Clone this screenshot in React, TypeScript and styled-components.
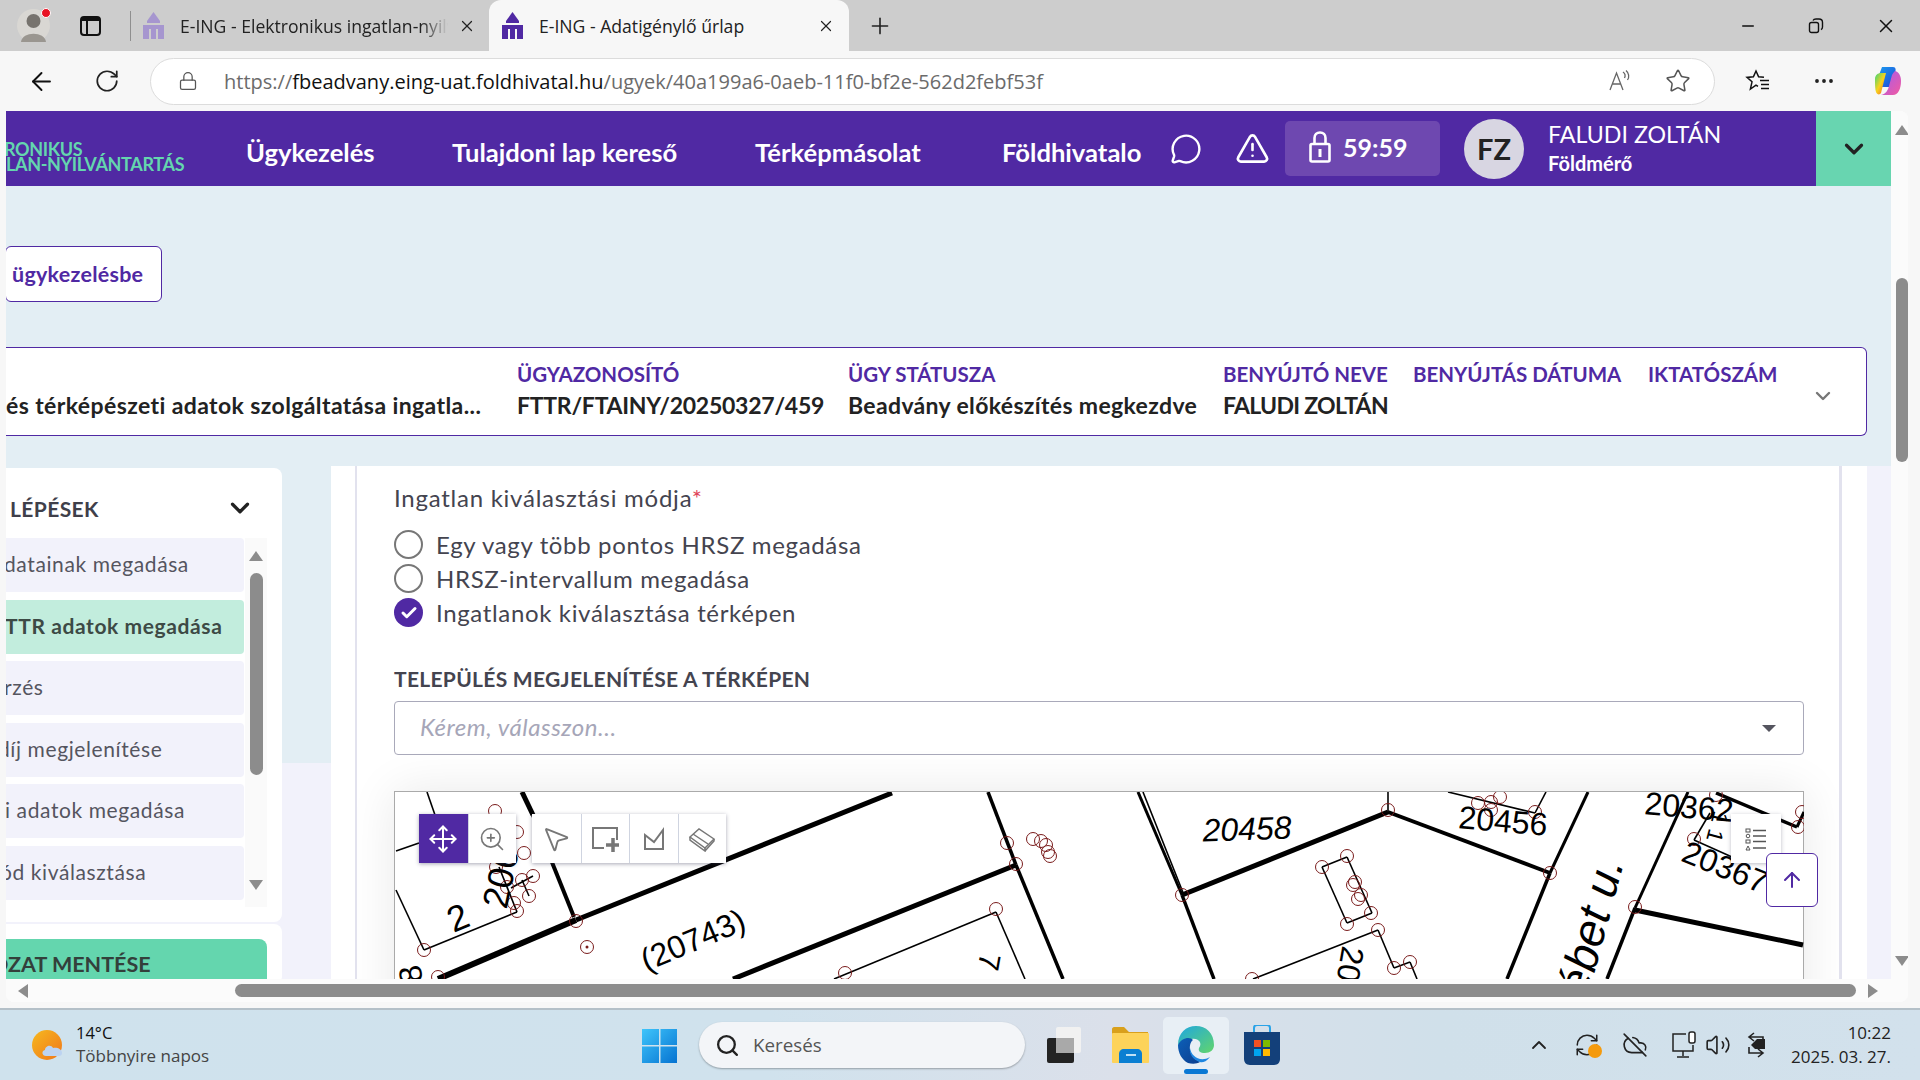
import styled, { createGlobalStyle } from "styled-components";
import {
  ArrowLeft,
  ArrowUp,
  Check,
  ChevronDown,
  ChevronUp,
  CloudOff,
  Lock,
  MessageCircle,
  Minus,
  Move,
  MoreHorizontal,
  MousePointer2,
  Plus,
  RefreshCw,
  RotateCw,
  Search,
  Star,
  TriangleAlert,
  Volume2,
  X,
  ZoomIn,
} from "lucide-react";

const PURPLE = "#5029a3";
const PAGE_FONT = `Lato, "Noto Sans", sans-serif`;
const UI_FONT = `"Open Sans", "Noto Sans", sans-serif`;

const GlobalStyle = createGlobalStyle`
  html, body {
    margin: 0;
    padding: 0;
    background: #f7f7f7;
  }
  * {
    box-sizing: border-box;
  }
`;

const Screen = styled.div`
  width: 1920px;
  height: 1080px;
  overflow: hidden;
  display: flex;
  flex-direction: column;
  background: #f7f7f7;
  font-family: ${PAGE_FONT};
`;

/* browser chrome */

const TabStrip = styled.div`
  height: 51px;
  background: #cdcdcd;
  display: flex;
  align-items: center;
  position: relative;
  font-family: ${UI_FONT};
  color: #222;
`;

const ProfileSlot = styled.div`
  width: 17px;
`;

const Avatar = styled.div`
  width: 33px;
  height: 33px;
  border-radius: 50%;
  background: #d9d7d3;
  position: relative;
`;

const RedDot = styled.span`
  position: absolute;
  top: -1px;
  right: -1px;
  width: 10px;
  height: 10px;
  background: #e81123;
  border-radius: 50%;
  border: 1px solid #fff;
`;

const TabsToggle = styled.div`
  width: 21px;
  height: 20px;
  margin-left: 30px;
  border: 2px solid #111;
  border-radius: 4px;
  border-top-width: 5px;
  position: relative;
  &::after {
    content: "";
    position: absolute;
    left: 4px;
    top: -1px;
    bottom: 0;
    width: 1.5px;
    background: #111;
  }
`;

const Divider = styled.div`
  width: 1px;
  height: 30px;
  background: #8f8f8f;
  margin: 0 12px 0 29px;
`;

const Tab = styled.div<{ $active?: boolean; $w: number }>`
  width: ${(p) => p.$w}px;
  height: ${(p) => (p.$active ? "51px" : "40px")};
  display: flex;
  align-items: center;
  flex-shrink: 0;
  background: ${(p) => (p.$active ? "#f7f7f7" : "transparent")};
  border-radius: ${(p) => (p.$active ? "12px 12px 0 0" : "0")};
  padding-left: ${(p) => (p.$active ? "13px" : "0")};
`;

const TabTitle = styled.span<{ $w: number; $faded?: boolean }>`
  width: ${(p) => p.$w}px;
  margin-left: 16px;
  white-space: nowrap;
  overflow: hidden;
  font-size: 17.6px;
  ${(p) =>
    p.$faded
      ? "-webkit-mask-image: linear-gradient(90deg, #000 90%, transparent 100%);"
      : ""}
`;

const CloseGlyph = styled.span<{ $ml: number }>`
  display: flex;
  margin-left: ${(p) => p.$ml}px;
`;

const NewTabGlyph = styled.span`
  display: flex;
  margin-left: 18px;
`;

const WindowButtons = styled.div`
  margin-left: auto;
  display: flex;
  align-items: center;
  gap: 51px;
  padding-right: 23px;
`;

const AddressRow = styled.div`
  height: 60px;
  display: flex;
  align-items: center;
  background: #f7f7f7;
  font-family: ${UI_FONT};
  padding-left: 27px;
`;

const NavIconSlot = styled.div<{ $w: number }>`
  width: ${(p) => p.$w}px;
  display: flex;
  align-items: center;
  flex-shrink: 0;
`;

const Omnibox = styled.div`
  width: 1565px;
  height: 47px;
  background: #fff;
  border: 1.5px solid #dcdcdc;
  border-radius: 24px;
  display: flex;
  align-items: center;
  padding: 0 23px 0 27px;
  flex-shrink: 0;
`;

const Url = styled.div`
  margin-left: 26px;
  font-size: 20px;
  color: #6b6b6b;
  white-space: nowrap;
  & b {
    font-weight: 400;
    color: #111;
  }
`;

const OmniIcons = styled.div`
  margin-left: auto;
  display: flex;
  align-items: center;
  gap: 33px;
  color: #666;
`;

const ChromeTools = styled.div`
  display: flex;
  align-items: center;
  margin-left: 30px;
  gap: 41px;
`;

const CopilotSlot = styled.div`
  display: flex;
  margin-left: -5px;
`;

/* the page inside the browser */

const Viewport = styled.div`
  height: 891px;
  margin: 0 12px 0 6px;
  background: #fbfbfb;
  border-radius: 0 8px 8px 8px;
  overflow: hidden;
  display: flex;
  flex-direction: column;
  position: relative;
`;

const ViewportRow = styled.div`
  flex: 1;
  min-height: 0;
  display: flex;
`;

const Page = styled.div`
  width: 1885px;
  display: flex;
  flex-direction: column;
  background: #e3eef4;
  overflow: hidden;
`;

const VScroll = styled.div`
  width: 17px;
  padding-left: 5px;
  display: flex;
  flex-direction: column;
  align-items: center;
  background: #fbfbfb;
`;

const ScrollArrowUp = styled.span<{ $mt?: number }>`
  width: 0;
  height: 0;
  margin-top: ${(p) => p.$mt || 0}px;
  border-left: 7px solid transparent;
  border-right: 7px solid transparent;
  border-bottom: 10px solid #8c8c8c;
`;

const ScrollArrowDown = styled.span<{ $mt?: number }>`
  width: 0;
  height: 0;
  margin-top: ${(p) => p.$mt || 0}px;
  border-left: 7px solid transparent;
  border-right: 7px solid transparent;
  border-top: 10px solid #8c8c8c;
`;

const VThumb = styled.div`
  width: 12px;
  height: 184px;
  background: #8c8c8c;
  border-radius: 6px;
  margin-top: 143px;
`;

const HScroll = styled.div`
  height: 23px;
  display: flex;
  align-items: center;
  background: #fbfbfb;
  padding-left: 12px;
`;

const ArrowLeftTri = styled.span`
  width: 0;
  height: 0;
  border-top: 7px solid transparent;
  border-bottom: 7px solid transparent;
  border-right: 10px solid #8c8c8c;
`;

const ArrowRightTri = styled.span`
  width: 0;
  height: 0;
  border-top: 7px solid transparent;
  border-bottom: 7px solid transparent;
  border-left: 10px solid #8c8c8c;
  margin-left: 12px;
`;

const HThumb = styled.div`
  width: 1621px;
  height: 13px;
  background: #8c8c8c;
  border-radius: 7px;
  margin-left: 207px;
`;

/* header */

const Header = styled.div`
  height: 75px;
  background: ${PURPLE};
  display: flex;
  align-items: center;
  flex-shrink: 0;
  color: #fff;
`;

const Logo = styled.div`
  width: 240px;
  font-size: 18px;
  line-height: 15px;
  font-weight: 700;
  color: #64d6ae;
  white-space: nowrap;
  overflow: hidden;
  padding-top: 17px;
  letter-spacing: -0.35px;
  text-indent: -2px;
`;

const Nav = styled.nav`
  display: grid;
  grid-template-columns: 206px 303px 247px 137px;
  font-size: 25.6px;
  font-weight: 700;
  white-space: nowrap;
  padding-top: 6px;
`;

const NavLink = styled.a`
  color: #fff;
  text-decoration: none;
`;

const HeaderIcons = styled.div`
  width: 146px;
  display: flex;
  align-items: center;
  padding-left: 31px;
  gap: 33px;
`;

const Timer = styled.div`
  width: 155px;
  height: 55px;
  background: #6e48b0;
  border-radius: 5px;
  display: flex;
  align-items: center;
  padding: 0 0 3px 24px;
  gap: 12px;
  font-size: 25px;
  font-weight: 700;
`;

const Initials = styled.div`
  width: 60px;
  height: 60px;
  border-radius: 50%;
  background: #d8d6e2;
  color: #222;
  font-size: 29px;
  font-weight: 700;
  display: flex;
  align-items: center;
  justify-content: center;
  margin-left: 24px;
`;

const UserBlock = styled.div`
  margin-left: 24px;
  width: 268px;
  padding-bottom: 5px;
  display: flex;
  flex-direction: column;
  gap: 4px;
`;

const UserName = styled.div`
  font-size: 23.2px;
  line-height: 30px;
  font-weight: 400;
`;

const UserRole = styled.div`
  font-size: 20px;
  line-height: 20px;
  font-weight: 700;
`;

const HeaderToggle = styled.div`
  width: 75px;
  height: 75px;
  margin-left: auto;
  background: #68d5b0;
  color: #222;
  display: flex;
  align-items: center;
  justify-content: center;
`;

/* top of the page */

const BackButton = styled.div`
  width: 157px;
  height: 56px;
  margin: 60px 0 0 -1px;
  flex-shrink: 0;
  background: #fff;
  border: 1.5px solid ${PURPLE};
  border-radius: 6px;
  display: flex;
  align-items: center;
  padding-left: 6px;
  color: ${PURPLE};
  font-size: 21.5px;
  letter-spacing: 0.25px;
  font-weight: 700;
`;

const InfoBox = styled.div`
  height: 89px;
  width: 1861px;
  margin: 45px 0 30px 0;
  flex-shrink: 0;
  background: #fff;
  border: 1.5px solid ${PURPLE};
  border-left: 0;
  border-radius: 0 6px 6px 0;
  display: grid;
  grid-template-columns: 511px 331px 375px 190px 235px 1fr;
  align-items: start;
  padding-top: 12px;
  position: relative;
`;

const InfoCol = styled.div`
  display: flex;
  flex-direction: column;
  gap: 3px;
  white-space: nowrap;
`;

const InfoLabel = styled.div`
  font-size: 20.5px;
  line-height: 28px;
  font-weight: 700;
  color: ${PURPLE};
`;

const InfoValue = styled.div<{ $ls: number }>`
  font-size: 23px;
  line-height: 28px;
  font-weight: 700;
  letter-spacing: ${(p) => p.$ls}px;
  color: #222;
`;

const InfoToggle = styled.div`
  position: absolute;
  right: 31px;
  top: 36px;
  color: #777;
  display: flex;
`;

/* body: steps + form */

const Body = styled.div`
  flex: 1;
  min-height: 0;
  display: flex;
  overflow: hidden;
  background: linear-gradient(#e3eef4 297px, #f2f2fb 297px);
`;

const Sidebar = styled.aside`
  width: 276px;
  padding-top: 2px;
  display: flex;
  flex-direction: column;
  gap: 2px;
  flex-shrink: 0;
`;

const SidePanel = styled.div<{ $h: number }>`
  height: ${(p) => p.$h}px;
  flex-shrink: 0;
  background: #fff;
  border-radius: 0 8px 8px 0;
  overflow: hidden;
`;

const StepsHead = styled.div`
  height: 70px;
  padding: 25px 27px 0 4px;
  display: flex;
  justify-content: space-between;
  align-items: flex-start;
  font-size: 21px;
  letter-spacing: 0.4px;
  line-height: 32px;
  font-weight: 700;
  color: #3f3f4a;
`;

const StepsBody = styled.div`
  display: flex;
`;

const StepList = styled.div`
  width: 238px;
  display: flex;
  flex-direction: column;
  gap: 7.6px;
`;

const Step = styled.div<{ $active?: boolean }>`
  height: 54px;
  padding-bottom: 3px;
  background: ${(p) => (p.$active ? "#c2eddd" : "#f2f2fb")};
  border-radius: 0 4px 4px 0;
  display: flex;
  align-items: center;
  overflow: hidden;
  white-space: nowrap;
  font-size: 21px;
  letter-spacing: 0.6px;
  font-weight: ${(p) => (p.$active ? 700 : 400)};
  color: ${(p) => (p.$active ? "#3d4a45" : "#55555f")};
`;

const StepText = styled.span<{ $shift: number }>`
  margin-left: ${(p) => p.$shift}px;
`;

const StepScroll = styled.div`
  width: 22px;
  height: 369px;
  margin-left: 1px;
  background: #fafafa;
  display: flex;
  flex-direction: column;
  align-items: center;
  padding-top: 13px;
`;

const StepThumb = styled.div`
  width: 13px;
  height: 202px;
  background: #8c8c8c;
  border-radius: 7px;
  margin: 12px 0 105px;
`;

const SaveButton = styled.div`
  width: 261px;
  height: 60px;
  margin-top: 15px;
  background: #64d6ae;
  border-radius: 0 8px 0 0;
  font-size: 21.5px;
  font-weight: 700;
  color: #33403b;
  padding-top: 12px;
  white-space: nowrap;
  text-indent: -15px;
`;

const Main = styled.main`
  width: 1536px;
  margin-left: 49px;
  background: #fff;
  padding-left: 24px;
  flex-shrink: 0;
`;

const FormCard = styled.div`
  width: 1487px;
  height: 100%;
  border-left: 2.5px solid #e2e2ee;
  border-right: 3px solid #e2e2ee;
  padding: 16px 35px 0 37px;
  color: #44444f;
  overflow: hidden;
`;

const FieldLabel = styled.div`
  font-size: 24px;
  letter-spacing: 0.75px;
  line-height: 32px;
  font-weight: 400;
  & em {
    color: #e0455a;
    font-style: normal;
  }
`;

const RadioGroup = styled.div`
  margin-top: 16px;
  display: flex;
  flex-direction: column;
  gap: 5px;
`;

const RadioRow = styled.label`
  display: flex;
  align-items: center;
  gap: 13px;
  height: 29px;
  font-size: 24px;
  letter-spacing: 0.65px;
`;

const RadioMark = styled.span<{ $on?: boolean }>`
  width: 29px;
  height: 29px;
  border-radius: 50%;
  border: ${(p) => (p.$on ? "0" : "2.5px solid #777")};
  background: ${(p) => (p.$on ? PURPLE : "#fff")};
  color: #fff;
  display: flex;
  align-items: center;
  justify-content: center;
  flex-shrink: 0;
`;

const SectionLabel = styled.div`
  margin-top: 38px;
  font-size: 21px;
  letter-spacing: 0.3px;
  line-height: 28px;
  font-weight: 700;
  color: #44444f;
`;

const Select = styled.div`
  margin-top: 8px;
  height: 54px;
  padding: 0 27px 4px 25px;
  border: 1.5px solid #a9a9ba;
  border-radius: 4px;
  display: flex;
  align-items: center;
  justify-content: space-between;
  font-size: 24px;
  letter-spacing: 0.55px;
  font-style: italic;
  color: #a6a6b8;
`;

const Caret = styled.span`
  width: 0;
  height: 0;
  margin-top: 4px;
  border-left: 7px solid transparent;
  border-right: 7px solid transparent;
  border-top: 7px solid #55555f;
`;

const MapBox = styled.div`
  margin-top: 36px;
  height: 240px;
  position: relative;
  background: #fff;
  border: 1px solid #aaa;
  border-width: 1px 1px 0 1px;
  box-shadow: 0 0 45px rgba(0, 0, 0, 0.09);
`;

const MapSvg = styled.svg`
  display: block;
  width: 1409px;
  height: 187px;
`;

const ToolGroup = styled.div<{ $left: number }>`
  position: absolute;
  left: ${(p) => p.$left}px;
  top: 22px;
  display: flex;
  background: #fff;
  box-shadow: 0 1px 4px rgba(60, 60, 90, 0.45);
`;

const ToolButton = styled.div<{ $active?: boolean }>`
  width: 48.5px;
  height: 49px;
  display: flex;
  align-items: center;
  justify-content: center;
  color: ${(p) => (p.$active ? "#fff" : "#777")};
  background: ${(p) => (p.$active ? PURPLE : "#fff")};
  & + & {
    border-left: 1px solid #cfd4e0;
  }
`;

const LegendButton = styled.div`
  position: absolute;
  left: 1336px;
  top: 22px;
  width: 50px;
  height: 49px;
  background: #fff;
  box-shadow: 0 1px 4px rgba(60, 60, 90, 0.35);
  display: flex;
  align-items: center;
  justify-content: center;
`;

const TopButton = styled.div`
  position: absolute;
  left: 1371px;
  top: 61px;
  width: 52px;
  height: 54px;
  background: #fff;
  border: 1.5px solid ${PURPLE};
  border-radius: 6px;
  color: ${PURPLE};
  display: flex;
  align-items: center;
  justify-content: center;
`;

const RightGutter = styled.div`
  flex: 1;
  background: #f2f2fb;
`;

/* windows taskbar */

const Taskbar = styled.div`
  height: 72px;
  margin-top: 6px;
  border-top: 2px solid #b4c0c8;
  background: linear-gradient(90deg, #cfe2ed 0%, #d0e2ed 40%, #dbe0ea 58%, #d0e0ea 75%, #d2e1ec 100%);
  display: flex;
  align-items: center;
  position: relative;
  font-family: ${UI_FONT};
  color: #222;
`;

const Weather = styled.div`
  margin-left: 32px;
  display: flex;
  align-items: center;
  gap: 12px;
  width: 610px;
`;

const WeatherText = styled.div`
  display: flex;
  flex-direction: column;
  padding-bottom: 2px;
  font-size: 17px;
  line-height: 23px;
  color: #444;
  & b {
    font-weight: 400;
    color: #111;
    font-size: 16.5px;
  }
`;

const SearchPill = styled.div`
  width: 326px;
  height: 46px;
  margin-left: 22px;
  border-radius: 23px;
  background: #f3f5f8;
  box-shadow: 0 1px 2px rgba(0, 0, 0, 0.3);
  display: flex;
  align-items: center;
  padding-left: 16px;
  gap: 13px;
  font-size: 18.8px;
  color: #555;
`;

const AppIcons = styled.div`
  display: flex;
  align-items: center;
  margin-left: 6px;
`;

const AppSlot = styled.div<{ $active?: boolean }>`
  width: 66px;
  height: 57px;
  border-radius: 5px;
  display: flex;
  align-items: center;
  justify-content: center;
  position: relative;
  background: ${(p) => (p.$active ? "#e8eff5" : "transparent")};
  &::after {
    content: "";
    display: ${(p) => (p.$active ? "block" : "none")};
    position: absolute;
    bottom: 0;
    left: 21px;
    width: 24px;
    height: 5px;
    background: #0a78d4;
    border-radius: 3px;
  }
`;

const Tray = styled.div`
  margin-left: auto;
  display: flex;
  align-items: center;
  padding-right: 29px;
`;

const TrayItem = styled.div<{ $ml: number }>`
  margin-left: ${(p) => p.$ml}px;
  display: flex;
  position: relative;
`;

const SyncDot = styled.span`
  position: absolute;
  right: -2px;
  bottom: 0;
  width: 14px;
  height: 14px;
  border-radius: 50%;
  background: #f59a0c;
`;

const Clock = styled.div`
  margin-left: 23px;
  text-align: right;
  font-size: 17px;
  line-height: 24px;
  color: #222;
`;

const MAP_THICK: [number, number, number, number, number][] = [
  [437, 979, 575, 920, 6],
  [575, 920, 891, 793, 5],
  [521, 792, 532, 815, 5],
  [532, 815, 573, 917, 4],
  [732, 979, 1015, 865, 5],
  [987, 792, 1015, 865, 3.5],
  [1015, 865, 1062, 979, 3.5],
  [1137, 792, 1181, 895, 3],
  [1181, 895, 1213, 979, 3.5],
  [1181, 895, 1387, 812, 5],
  [1387, 812, 1549, 873, 4],
  [1587, 792, 1549, 873, 3],
  [1549, 873, 1506, 979, 3.5],
  [1687, 792, 1634, 908, 3],
  [1634, 908, 1606, 979, 3.5],
  [1634, 910, 1802, 945, 5],
  [1715, 793, 1796, 827, 3.5],
  [1796, 827, 1803, 812, 3],
];

const MAP_THIN: [number, number, number, number][] = [
  [426, 792, 434, 815],
  [395, 851, 418, 843],
  [395, 890, 423, 950],
  [423, 950, 516, 912],
  [516, 912, 498, 867],
  [532, 876, 510, 888],
  [521, 880, 528, 896],
  [833, 979, 995, 912],
  [995, 912, 1024, 979],
  [1142, 792, 1183, 895],
  [1387, 792, 1387, 812],
  [1321, 867, 1346, 857],
  [1346, 857, 1371, 913],
  [1371, 913, 1346, 923],
  [1346, 923, 1321, 867],
  [1447, 792, 1534, 813],
  [1545, 792, 1534, 813],
  [1252, 979, 1377, 930],
  [1377, 930, 1393, 968],
  [1393, 968, 1409, 962],
  [1409, 962, 1416, 979],
  [1709, 813, 1693, 840],
  [1693, 840, 1731, 857],
];

const MAP_POINTS: [number, number][] = [
  [494, 811], [516, 832], [523, 853], [532, 876], [521, 880], [528, 896], [513, 903], [516, 911],
  [506, 887], [495, 867], [423, 950], [437, 977], [575, 921], [586, 947], [844, 973], [1006, 843],
  [1015, 864], [1032, 839], [1040, 841], [1045, 845], [1047, 852], [1049, 856], [995, 909], [1181, 895],
  [1387, 810], [1549, 873], [1321, 867], [1346, 856], [1354, 882], [1352, 885], [1360, 895], [1357, 899],
  [1370, 913], [1346, 924], [1377, 930], [1393, 968], [1409, 962], [1251, 979], [1634, 907], [1693, 839],
  [1797, 827], [1801, 812], [1477, 803], [1490, 802], [1499, 797], [1534, 812], [1490, 810], [1715, 795],
];

const MAP_LABELS: { x: number; y: number; r: number; s: number; t: string; it?: boolean }[] = [
  { x: 692, y: 951, r: -23, s: 32, t: "(20743)" },
  { x: 457, y: 930, r: -23, s: 36, t: "2" },
  { x: 500, y: 890, r: -78, s: 36, t: "206" },
  { x: 410, y: 985, r: -100, s: 32, t: "8" },
  { x: 988, y: 972, r: 100, s: 30, t: "7" },
  { x: 1246, y: 840, r: -2, s: 32, t: "20458", it: true },
  { x: 1502, y: 832, r: 5, s: 32, t: "20456" },
  { x: 1688, y: 818, r: 5, s: 32, t: "20362" },
  { x: 1724, y: 878, r: 22, s: 32, t: "20367" },
  { x: 1349, y: 975, r: 100, s: 32, t: "20" },
  { x: 1590, y: 942, r: -75, s: 46, t: "ébet u.", it: true },
  { x: 1716, y: 834, r: 105, s: 22, t: "1 1" },
];

function CadastreMap() {
  return (
    <MapSvg viewBox="394 792 1409 187">
      {MAP_THICK.map(([x1, y1, x2, y2, w], i) => (
        <line key={i} x1={x1} y1={y1} x2={x2} y2={y2} stroke="#000" strokeWidth={w} />
      ))}
      {MAP_THIN.map(([x1, y1, x2, y2], i) => (
        <line key={i} x1={x1} y1={y1} x2={x2} y2={y2} stroke="#000" strokeWidth={1.6} />
      ))}
      {MAP_POINTS.map(([cx, cy], i) => (
        <circle key={i} cx={cx} cy={cy} r={6.5} fill="none" stroke="#7a1c1c" strokeWidth={1} />
      ))}
      <circle cx={586} cy={947} r={1.5} fill="#7a1c1c" />
      {MAP_LABELS.map((l, i) => (
        <text
          key={i}
          x={l.x}
          y={l.y}
          fontSize={l.s}
          fontStyle={l.it ? "italic" : "normal"}
          fontFamily="'Liberation Sans', Arial, sans-serif"
          textAnchor="middle"
          transform={`rotate(${l.r} ${l.x} ${l.y - l.s / 3})`}
        >
          {l.t}
        </text>
      ))}
    </MapSvg>
  );
}

function Favicon({ color }: { color: string }) {
  return (
    <svg width="21" height="27" viewBox="0 0 21 27">
      <path d="M10.5 0 L17 9 L17 11 L4 11 L4 9 Z" fill={color} />
      <path d="M0 13 H21 V27 H15 V17 H13 V27 H8 V17 H6 V27 H0 Z" fill={color} />
    </svg>
  );
}

function ProfileFigure() {
  return (
    <svg width="33" height="33" viewBox="0 0 33 33">
      <circle cx="16.5" cy="12" r="7" fill="#77736e" />
      <path d="M4 33 C5 22 28 22 29 33 Z" fill="#9a9690" />
    </svg>
  );
}

function RestoreIcon() {
  return (
    <svg width="16" height="16" viewBox="0 0 16 16" fill="none" stroke="#111" strokeWidth="1.4">
      <rect x="1.5" y="4.5" width="9" height="10" rx="2" />
      <path d="M5 2.5 C5.5 1.5 6.5 1 8 1 H11 C13 1 14.5 2.5 14.5 4.5 V9 C14.5 10.5 13.8 11.2 13 11.6" />
    </svg>
  );
}

function ReadAloud() {
  return (
    <svg width="24" height="24" viewBox="0 0 24 24" fill="none" stroke="#666" strokeWidth="1.3">
      <path d="M2 21 L8.5 4 L15 21 M4.5 15 H12.5" />
      <path d="M15 3 C17 4.5 17.5 7 16.5 9 M18 1.5 C21 4 21.5 8 19.5 11" />
    </svg>
  );
}

function FavoritesIcon() {
  return (
    <svg width="26" height="26" viewBox="0 0 26 26" fill="none" stroke="#111" strokeWidth="1.5">
      <path d="M19 9.3 L13.6 8.8 L11 3 L8.4 8.8 L2 9.4 L7 13.8 L5.4 21 L11 17.2 L13 18.4" />
      <path d="M15 12.5 H24 M16 16.5 H24 M16 20.5 H24" />
    </svg>
  );
}

function CopilotIcon() {
  return (
    <svg width="32" height="32" viewBox="0 0 32 32">
      <defs>
        <linearGradient id="cpA" x1="0" y1="0" x2="1" y2="1">
          <stop offset="0" stopColor="#1aa0f0" />
          <stop offset="1" stopColor="#2048d8" />
        </linearGradient>
        <linearGradient id="cpB" x1="0" y1="0" x2="1" y2="1">
          <stop offset="0" stopColor="#37d67a" />
          <stop offset="0.5" stopColor="#f8d21d" />
          <stop offset="1" stopColor="#f2572b" />
        </linearGradient>
        <linearGradient id="cpC" x1="0" y1="0" x2="1" y2="1">
          <stop offset="0" stopColor="#a45cf0" />
          <stop offset="1" stopColor="#f25aa0" />
        </linearGradient>
      </defs>
      <path d="M10 2 H21 C24 2 24 5 23 8 L18 22 H8 L4 18 Z" fill="url(#cpA)" />
      <path d="M3 14 C3 10 6 8 9 8 H14 L9 28 C8 30 5 30 4 27 C3 24 3 18 3 14 Z" fill="url(#cpB)" />
      <path d="M23 6 C27 7 29 11 29 16 C29 24 26 30 21 30 H9 C14 29 16 25 17 21 L20 10 C21 8 22 7 23 6 Z" fill="url(#cpC)" />
    </svg>
  );
}

function TallLock() {
  return (
    <svg width="22" height="32" viewBox="0 0 22 32" fill="none" stroke="#fff" strokeWidth="2.6">
      <path d="M5.5 14 V7 C5.5 3.5 7.8 1.5 11 1.5 C14.2 1.5 16.5 3.5 16.5 7 V14" />
      <rect x="1.5" y="13" width="19" height="17.5" rx="1.5" />
      <path d="M11 18 V26" strokeWidth="3" />
    </svg>
  );
}

function ToolSquarePlus() {
  return (
    <svg width="28" height="28" viewBox="0 0 28 28" fill="none" stroke="#777" strokeWidth="2">
      <path d="M26 15 V3 H2 V23 H13" />
      <path d="M22 13 V27 M15 20 H28" strokeWidth="3.5" />
    </svg>
  );
}

function ToolPolygon() {
  return (
    <svg width="24" height="24" viewBox="0 0 24 24" fill="none" stroke="#777" strokeWidth="2">
      <path d="M3 8 L12 15 L21 3 V22 H3 Z" />
    </svg>
  );
}

function ToolEraser() {
  return (
    <svg width="28" height="26" viewBox="0 0 28 26" fill="none" stroke="#777" strokeWidth="1.5">
      <path d="M2 11 L11 3 L26 13 L17 22 Z" />
      <path d="M2 11 V14 L17 25 V22 M26 13 V15 L17 25" />
      <path d="M5 8 L20 18" />
    </svg>
  );
}

function LegendIcon() {
  return (
    <svg width="22" height="24" viewBox="0 0 22 24" fill="none" stroke="#555" strokeWidth="1.6">
      <rect x="1" y="2" width="4" height="3" strokeWidth="1" />
      <circle cx="3" cy="9" r="1.8" strokeWidth="1" />
      <rect x="1" y="13" width="4" height="3" strokeWidth="1" />
      <path d="M1 23 L3 19 L5 23 Z" strokeWidth="1" />
      <path d="M8 3.5 H21 M8 9 H21 M8 14.5 H21 M8 21 H21" />
    </svg>
  );
}

function WeatherIcon() {
  return (
    <svg width="32" height="30" viewBox="0 0 32 30">
      <defs>
        <linearGradient id="sun" x1="0" y1="0" x2="1" y2="1">
          <stop offset="0" stopColor="#f6b91f" />
          <stop offset="1" stopColor="#f0761a" />
        </linearGradient>
      </defs>
      <circle cx="15" cy="15" r="15" fill="url(#sun)" />
      <path d="M14 26 C10 26 9 21 13 20 C13 16 19 14 21 18 C25 17 30 19 30 23 C30 26 27 26 26 26 Z" fill="#bcd3f1" />
    </svg>
  );
}

function WindowsLogo() {
  return (
    <svg width="35" height="35" viewBox="0 0 35 35">
      <defs>
        <linearGradient id="win" x1="0" y1="0" x2="1" y2="1">
          <stop offset="0" stopColor="#3fc5fb" />
          <stop offset="1" stopColor="#0673d1" />
        </linearGradient>
      </defs>
      <path d="M0 1 H17 V17 H0 Z M18.5 1 H35 V17 H18.5 Z M0 18.5 H17 V35 H0 Z M18.5 18.5 H35 V35 H18.5 Z" fill="url(#win)" />
    </svg>
  );
}

function StackIcon() {
  return (
    <svg width="36" height="36" viewBox="0 0 36 36">
      <rect x="1" y="11" width="27" height="25" rx="2" fill="#232323" />
      <rect x="10" y="0" width="25" height="26" rx="2" fill="#f1f1f1" />
      <rect x="10" y="11" width="18" height="15" fill="#a9a9a9" />
    </svg>
  );
}

function FolderIcon() {
  return (
    <svg width="37" height="37" viewBox="0 0 37 37">
      <path d="M0 2 C0 1 1 0 2 0 H12 L17 5 H36 V12 H0 Z" fill="#d9a01c" />
      <rect x="0" y="6" width="37" height="30" rx="1" fill="#fdd35a" />
      <path d="M7 36 V27 C7 24 9 22 12 22 H25 C28 22 30 24 30 27 V36 Z" fill="#0b7fd2" />
      <rect x="14" y="27" width="10" height="2" fill="#bfe0f5" />
    </svg>
  );
}

function EdgeIcon() {
  return (
    <svg width="36" height="38" viewBox="0 0 36 38">
      <defs>
        <linearGradient id="edgeTop" x1="0" y1="0" x2="1" y2="1">
          <stop offset="0" stopColor="#1fa7e0" />
          <stop offset="1" stopColor="#62d56c" />
        </linearGradient>
        <linearGradient id="edgeBase" x1="0" y1="0" x2="1" y2="1">
          <stop offset="0" stopColor="#0d5fb8" />
          <stop offset="1" stopColor="#0c3f8f" />
        </linearGradient>
      </defs>
      <path d="M0 19 C0 7 8 0 18 0 C28 0 36 7 36 19 C36 24 32 27 27 27 C22 27 20 25 21 22 C25 17 20 12 14 13 C7 14 3 17 0 19 Z" fill="url(#edgeTop)" />
      <path d="M0 19 C3 12 12 10 15 14 C10 18 10 30 22 36 C19 38 14 38 10 37 C4 34 0 27 0 19 Z" fill="url(#edgeBase)" />
      <path d="M12 22 C13 30 22 37 32 31 C28 36 24 37 22 36 C15 34 11 28 12 22 Z" fill="#1e86e0" />
    </svg>
  );
}

function StoreIcon() {
  return (
    <svg width="36" height="40" viewBox="0 0 36 40">
      <path d="M10 8 V3 C10 1 11 0 13 0 H23 C25 0 26 1 26 3 V8" fill="none" stroke="#2aa3e8" strokeWidth="2" />
      <path d="M0 7 H36 V34 C36 37 34 40 30 40 H6 C2 40 0 37 0 34 Z" fill="#13407a" />
      <rect x="10" y="15" width="7" height="7" fill="#f25022" />
      <rect x="19" y="15" width="7" height="7" fill="#7fba00" />
      <rect x="10" y="24" width="7" height="7" fill="#00a4ef" />
      <rect x="19" y="24" width="7" height="7" fill="#ffb900" />
    </svg>
  );
}

function PluggedMonitor() {
  return (
    <svg width="26" height="28" viewBox="0 0 26 28" fill="none" stroke="#222" strokeWidth="1.5">
      <path d="M15 3 H2 V20 H22 V14" />
      <path d="M12 20 V25 M6 26 H18" />
      <rect x="18" y="1" width="6" height="11" rx="2" fill="#fff" />
    </svg>
  );
}

function BatteryPlug() {
  return (
    <svg width="24" height="28" viewBox="0 0 24 28" fill="none" stroke="#222" strokeWidth="1.6">
      <path d="M10 2 L5 6 L10 10 M5 6 H19 V12" />
      <path d="M14 26 L19 22 L14 18 M19 22 H5 V16" />
      <path d="M7 14 L13 8 H21 V18 H11 Z" fill="#222" stroke="none" />
    </svg>
  );
}

export default function App() {
  return (
    <Screen>
      <GlobalStyle />
      <TabStrip>
        <ProfileSlot />
        <Avatar>
          <ProfileFigure />
          <RedDot />
        </Avatar>
        <TabsToggle />
        <Divider />
        <Tab $w={346}>
          <Favicon color="#a696cf" />
          <TabTitle $w={268} $faded>E-ING - Elektronikus ingatlan-nyilvántartás</TabTitle>
          <CloseGlyph $ml={10}>
            <X size={18} strokeWidth={1.6} />
          </CloseGlyph>
        </Tab>
        <Tab $w={360} $active>
          <Favicon color={PURPLE} />
          <TabTitle $w={275}>E-ING - Adatigénylő űrlap</TabTitle>
          <CloseGlyph $ml={3}>
            <X size={18} strokeWidth={1.6} />
          </CloseGlyph>
        </Tab>
        <NewTabGlyph>
          <Plus size={26} strokeWidth={1.5} />
        </NewTabGlyph>
        <WindowButtons>
          <Minus size={18} strokeWidth={2} color="#111" />
          <RestoreIcon />
          <X size={22} strokeWidth={1.6} color="#111" />
        </WindowButtons>
      </TabStrip>

      <AddressRow>
        <NavIconSlot $w={67}>
          <ArrowLeft size={29} strokeWidth={1.6} color="#111" />
        </NavIconSlot>
        <NavIconSlot $w={56}>
          <RotateCw size={26} strokeWidth={1.6} color="#222" />
        </NavIconSlot>
        <Omnibox>
          <Lock size={20} strokeWidth={1.5} color="#555" />
          <Url>
            https://<b>fbeadvany.eing-uat.foldhivatal.hu</b>/ugyek/40a199a6-0aeb-11f0-bf2e-562d2febf53f
          </Url>
          <OmniIcons>
            <ReadAloud />
            <Star size={26} strokeWidth={1.4} color="#555" />
          </OmniIcons>
        </Omnibox>
        <ChromeTools>
          <FavoritesIcon />
          <MoreHorizontal size={24} strokeWidth={1.8} color="#222" />
          <CopilotSlot>
            <CopilotIcon />
          </CopilotSlot>
        </ChromeTools>
      </AddressRow>

      <Viewport>
        <ViewportRow>
          <Page>
            <Header>
              <Logo>
                RONIKUS
                <br />
                LAN-NYILVÁNTARTÁS
              </Logo>
              <Nav>
                <NavLink>Ügykezelés</NavLink>
                <NavLink>Tulajdoni lap kereső</NavLink>
                <NavLink>Térképmásolat</NavLink>
                <NavLink>Földhivatalo</NavLink>
              </Nav>
              <HeaderIcons>
                <MessageCircle size={32} strokeWidth={1.8} color="#fff" />
                <TriangleAlert size={35} strokeWidth={1.8} color="#fff" />
              </HeaderIcons>
              <Timer>
                <TallLock />
                59:59
              </Timer>
              <Initials>FZ</Initials>
              <UserBlock>
                <UserName>FALUDI ZOLTÁN</UserName>
                <UserRole>Földmérő</UserRole>
              </UserBlock>
              <HeaderToggle>
                <ChevronDown size={30} strokeWidth={2.6} color="#222" />
              </HeaderToggle>
            </Header>

            <BackButton>ügykezelésbe</BackButton>

            <InfoBox>
              <InfoCol>
                <InfoLabel>&nbsp;</InfoLabel>
                <InfoValue $ls={0.4}>és térképészeti adatok szolgáltatása ingatla...</InfoValue>
              </InfoCol>
              <InfoCol>
                <InfoLabel>ÜGYAZONOSÍTÓ</InfoLabel>
                <InfoValue $ls={-0.25}>FTTR/FTAINY/20250327/459</InfoValue>
              </InfoCol>
              <InfoCol>
                <InfoLabel>ÜGY STÁTUSZA</InfoLabel>
                <InfoValue $ls={0.35}>Beadvány előkészítés megkezdve</InfoValue>
              </InfoCol>
              <InfoCol>
                <InfoLabel>BENYÚJTÓ NEVE</InfoLabel>
                <InfoValue $ls={-0.7}>FALUDI ZOLTÁN</InfoValue>
              </InfoCol>
              <InfoCol>
                <InfoLabel>BENYÚJTÁS DÁTUMA</InfoLabel>
              </InfoCol>
              <InfoCol>
                <InfoLabel>IKTATÓSZÁM</InfoLabel>
              </InfoCol>
              <InfoToggle>
                <ChevronDown size={24} strokeWidth={2.4} />
              </InfoToggle>
            </InfoBox>

            <Body>
              <Sidebar>
                <SidePanel $h={454}>
                  <StepsHead>
                    LÉPÉSEK
                    <ChevronDown size={30} strokeWidth={2.6} color="#222" />
                  </StepsHead>
                  <StepsBody>
                    <StepList>
                      <Step><StepText $shift={-2}>datainak megadása</StepText></Step>
                      <Step $active><StepText $shift={-1}>TTR adatok megadása</StepText></Step>
                      <Step><StepText $shift={-2}>rzés</StepText></Step>
                      <Step><StepText $shift={-8}>díj megjelenítése</StepText></Step>
                      <Step><StepText $shift={-1}>i adatok megadása</StepText></Step>
                      <Step><StepText $shift={-6}>ód kiválasztása</StepText></Step>
                    </StepList>
                    <StepScroll>
                      <ScrollArrowUp />
                      <StepThumb />
                      <ScrollArrowDown />
                    </StepScroll>
                  </StepsBody>
                </SidePanel>
                <SidePanel $h={60}>
                  <SaveButton>OZAT MENTÉSE</SaveButton>
                </SidePanel>
              </Sidebar>

              <Main>
                <FormCard>
                  <FieldLabel>
                    Ingatlan kiválasztási módja<em>*</em>
                  </FieldLabel>
                  <RadioGroup>
                    <RadioRow>
                      <RadioMark />
                      Egy vagy több pontos HRSZ megadása
                    </RadioRow>
                    <RadioRow>
                      <RadioMark />
                      HRSZ-intervallum megadása
                    </RadioRow>
                    <RadioRow>
                      <RadioMark $on>
                        <Check size={18} strokeWidth={4} />
                      </RadioMark>
                      Ingatlanok kiválasztása térképen
                    </RadioRow>
                  </RadioGroup>
                  <SectionLabel>TELEPÜLÉS MEGJELENÍTÉSE A TÉRKÉPEN</SectionLabel>
                  <Select>
                    Kérem, válasszon...
                    <Caret />
                  </Select>
                  <MapBox>
                    <CadastreMap />
                    <ToolGroup $left={24}>
                      <ToolButton $active>
                        <Move size={30} strokeWidth={1.6} />
                      </ToolButton>
                      <ToolButton>
                        <ZoomIn size={28} strokeWidth={1.4} />
                      </ToolButton>
                    </ToolGroup>
                    <ToolGroup $left={137}>
                      <ToolButton>
                        <MousePointer2 size={30} strokeWidth={1.5} />
                      </ToolButton>
                      <ToolButton>
                        <ToolSquarePlus />
                      </ToolButton>
                      <ToolButton>
                        <ToolPolygon />
                      </ToolButton>
                      <ToolButton>
                        <ToolEraser />
                      </ToolButton>
                    </ToolGroup>
                    <LegendButton>
                      <LegendIcon />
                    </LegendButton>
                    <TopButton>
                      <ArrowUp size={24} strokeWidth={2} />
                    </TopButton>
                  </MapBox>
                </FormCard>
              </Main>
              <RightGutter />
            </Body>
          </Page>
          <VScroll>
            <ScrollArrowUp $mt={14} />
            <VThumb />
            <ScrollArrowDown $mt={494} />
          </VScroll>
        </ViewportRow>
        <HScroll>
          <ArrowLeftTri />
          <HThumb />
          <ArrowRightTri />
        </HScroll>
      </Viewport>

      <Taskbar>
        <Weather>
          <WeatherIcon />
          <WeatherText>
            <b>14°C</b>
            Többnyire napos
          </WeatherText>
        </Weather>
        <WindowsLogo />
        <SearchPill>
          <Search size={25} strokeWidth={2.2} color="#222" />
          Keresés
        </SearchPill>
        <AppIcons>
          <AppSlot><StackIcon /></AppSlot>
          <AppSlot><FolderIcon /></AppSlot>
          <AppSlot $active><EdgeIcon /></AppSlot>
          <AppSlot><StoreIcon /></AppSlot>
        </AppIcons>
        <Tray>
          <TrayItem $ml={0}>
            <ChevronUp size={24} strokeWidth={1.8} />
          </TrayItem>
          <TrayItem $ml={23}>
            <RefreshCw size={26} strokeWidth={1.4} />
            <SyncDot />
          </TrayItem>
          <TrayItem $ml={22}>
            <CloudOff size={26} strokeWidth={1.5} />
          </TrayItem>
          <TrayItem $ml={23}>
            <PluggedMonitor />
          </TrayItem>
          <TrayItem $ml={8}>
            <Volume2 size={26} strokeWidth={1.5} />
          </TrayItem>
          <TrayItem $ml={13}>
            <BatteryPlug />
          </TrayItem>
          <Clock>
            10:22
            <br />
            2025. 03. 27.
          </Clock>
        </Tray>
      </Taskbar>
    </Screen>
  );
}
